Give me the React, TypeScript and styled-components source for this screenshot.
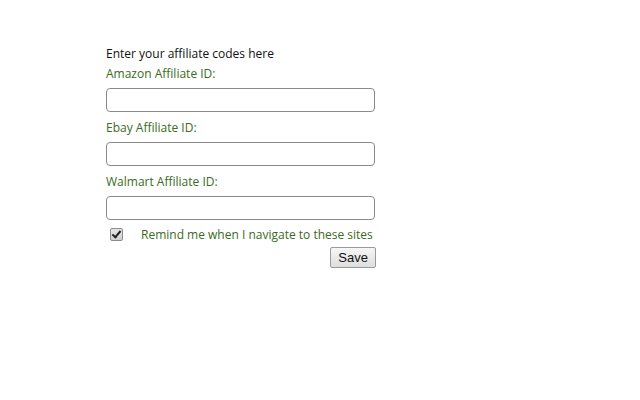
import React from "react";
import styled, { createGlobalStyle } from "styled-components";

const GlobalStyle = createGlobalStyle`
  html, body {
    margin: 0;
    padding: 0;
    background: #ffffff;
  }
  body {
    font-family: "Open Sans", "Liberation Sans", sans-serif;
    font-size: 12px;
    color: #111111;
  }
`;

const Page = styled.div`
  padding: 44px 0 0 106px;
`;

const Form = styled.form`
  width: 270px;
  display: flex;
  flex-direction: column;
`;

const Heading = styled.div`
  line-height: 20px;
  color: #111111;
`;

const Label = styled.label`
  line-height: 20px;
  color: #3a6b22;
`;

const TextField = styled.input`
  box-sizing: border-box;
  width: 269px;
  height: 24px;
  margin: 4px 0 6px;
  border: 1px solid #8a8a8a;
  border-radius: 4px;
  background: #ffffff;
  outline: none;
`;

const CheckRow = styled.div`
  display: flex;
  align-items: center;
  margin-top: -2px;
  height: 20px;
`;

const Check = styled.input`
  appearance: none;
  position: relative;
  box-sizing: border-box;
  width: 13px;
  height: 13px;
  margin: 0 18px 0 4px;
  border: 1px solid #8c8c8c;
  border-radius: 2px;
  background: linear-gradient(#e4e4e4, #d0d0d0);

  &:checked::after {
    content: "";
    position: absolute;
    left: 3px;
    top: 0px;
    width: 3px;
    height: 7px;
    border: solid #222222;
    border-width: 0 2px 2px 0;
    transform: rotate(40deg);
  }
`;

const CheckLabel = styled.label`
  color: #3a6b22;
  white-space: nowrap;
`;

const Actions = styled.div`
  display: flex;
  justify-content: flex-end;
  margin-top: 3px;
  width: 270px;
`;

const SaveButton = styled.button`
  font-family: "Liberation Sans", Arial, sans-serif;
  font-size: 13px;
  height: 21px;
  padding: 0 7px;
  border: 1px solid #9a9a9a;
  border-radius: 2px;
  background: linear-gradient(#f6f6f6, #dedede);
  color: #111111;
`;

const fields = [
  { id: "amazon", label: "Amazon Affiliate ID:" },
  { id: "ebay", label: "Ebay Affiliate ID:" },
  { id: "walmart", label: "Walmart Affiliate ID:" },
];

const App = () => {
  return (
    <>
      <GlobalStyle />
      <Page>
        <Form onSubmit={e => e.preventDefault()}>
          <Heading>Enter your affiliate codes here</Heading>
          {fields.map(f => (
            <React.Fragment key={f.id}>
              <Label htmlFor={f.id}>{f.label}</Label>
              <TextField id={f.id} type="text" />
            </React.Fragment>
          ))}
          <CheckRow>
            <Check id="remind" type="checkbox" defaultChecked />
            <CheckLabel htmlFor="remind">Remind me when I navigate to these sites</CheckLabel>
          </CheckRow>
          <Actions>
            <SaveButton type="submit">Save</SaveButton>
          </Actions>
        </Form>
      </Page>
    </>
  );
};

export default App;
